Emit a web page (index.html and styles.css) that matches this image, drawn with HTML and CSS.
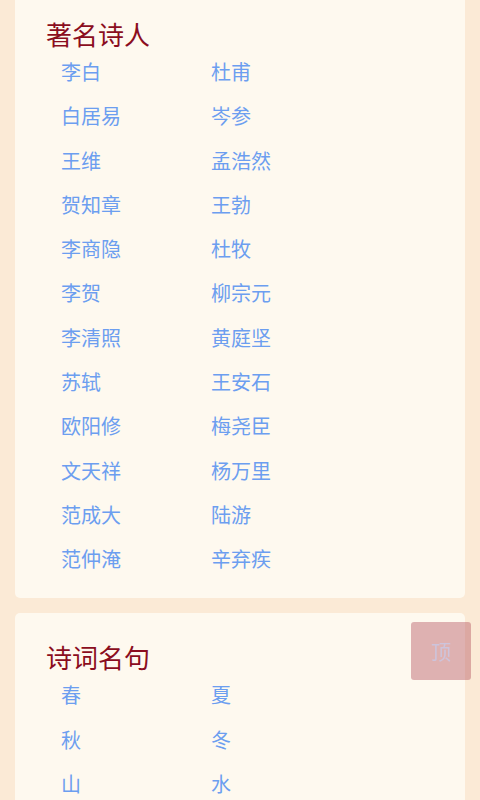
FILE: index.html
```html
<!DOCTYPE html>
<html lang="zh">
<head>
<meta charset="utf-8">
<link rel="stylesheet" href="styles.css">
</head>
<body>
<main class="page">
  <section class="card">
    <h2 class="card-title">著名诗人</h2>
    <ul class="grid">
      <li>李白</li><li>杜甫</li>
      <li>白居易</li><li>岑参</li>
      <li>王维</li><li>孟浩然</li>
      <li>贺知章</li><li>王勃</li>
      <li>李商隐</li><li>杜牧</li>
      <li>李贺</li><li>柳宗元</li>
      <li>李清照</li><li>黄庭坚</li>
      <li>苏轼</li><li>王安石</li>
      <li>欧阳修</li><li>梅尧臣</li>
      <li>文天祥</li><li>杨万里</li>
      <li>范成大</li><li>陆游</li>
      <li>范仲淹</li><li>辛弃疾</li>
    </ul>
  </section>
  <section class="card">
    <h2 class="card-title">诗词名句</h2>
    <ul class="grid">
      <li>春</li><li>夏</li>
      <li>秋</li><li>冬</li>
      <li>山</li><li>水</li>
    </ul>
  </section>
</main>
<button class="top-btn">顶</button>
</body>
</html>
```
FILE: styles.css
```css
html, body {
  margin: 0;
  padding: 0;
  background: #fbead6;
  font-family: "Noto Sans CJK SC", "Noto Sans", sans-serif;
}
.page {
  display: flex;
  flex-direction: column;
  gap: 15px;
  padding: 0 15px;
  margin-top: -10px;
}
.card {
  background: #fef9ef;
  border-radius: 5px;
  padding: 28px 0 17px 31px;
}
.card-title {
  margin: 0;
  font-size: 26px;
  line-height: 32px;
  font-weight: 400;
  color: #8b0d20;
}
.grid {
  list-style: none;
  margin: 0;
  padding: 0 0 0 15px;
  display: grid;
  grid-template-columns: 150px 150px;
  grid-auto-rows: 44.27px;
  align-items: center;
}
.grid li {
  font-size: 20px;
  line-height: 44px;
  color: #6c9ef0;
}
.top-btn {
  position: fixed;
  top: 622px;
  right: 9px;
  width: 60px;
  height: 58px;
  border: none;
  border-radius: 3px;
  background: rgba(176, 69, 86, 0.4);
  color: #cdc4dc;
  font-family: "Noto Sans CJK SC", sans-serif;
  font-size: 20px;
  padding: 0;
}
```
